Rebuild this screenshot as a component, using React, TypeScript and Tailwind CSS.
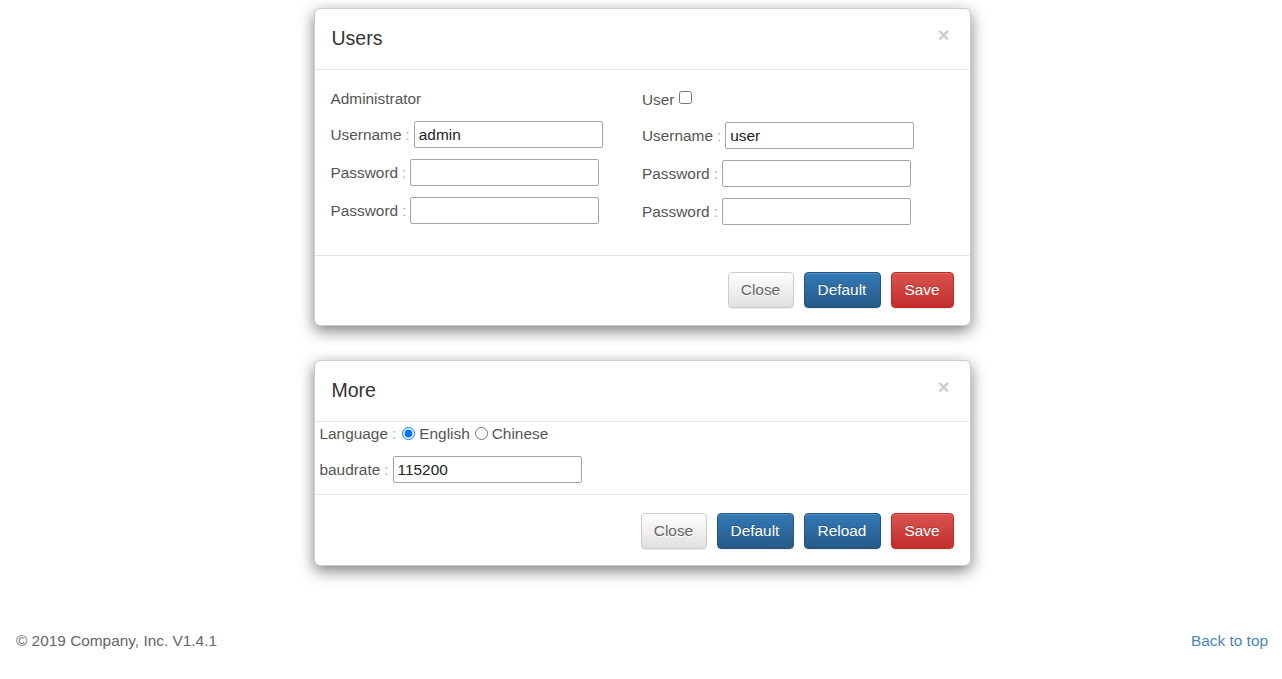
import React from "react";

const btnBase =
  "h-[36px] rounded-[4px] border text-[15.4px] leading-none shadow-[inset_0_1px_0_rgba(255,255,255,0.15),0_1px_1px_rgba(0,0,0,0.075)]";
const btnDefault = `${btnBase} border-[#ccc] bg-gradient-to-b from-white to-[#e0e0e0] text-[#666] [text-shadow:0_1px_0_#fff]`;
const btnPrimary = `${btnBase} border-[#245580] bg-gradient-to-b from-[#337ab7] to-[#265a88] text-white [text-shadow:0_-1px_0_rgba(0,0,0,0.2)]`;
const btnDanger = `${btnBase} border-[#b92c28] bg-gradient-to-b from-[#d9534f] to-[#c12e2a] text-white [text-shadow:0_-1px_0_rgba(0,0,0,0.2)]`;

const inputCls =
  "h-[27px] w-[189px] rounded-[2px] border border-[#a6a6a6] bg-white px-[4px] text-[15.4px] text-[#222] outline-none";

function Field({ label, value }: { label: string; value?: string }) {
  return (
    <div className="flex items-center">
      <span className="text-[#555]">{label}</span>
      <span className="ml-[4px] text-[#aaa]">:</span>
      <input type="text" defaultValue={value} className={`${inputCls} ml-[4px]`} />
    </div>
  );
}

function Header({ title }: { title: string }) {
  return (
    <div className="flex h-[61px] items-center justify-between border-b border-[#e5e5e5] pl-[17px] pr-[20px]">
      <h4 className="text-[19.5px] text-[#333]">{title}</h4>
      <button className="mt-[-9px] text-[20px] font-bold leading-none text-black opacity-20">×</button>
    </div>
  );
}

export default function App() {
  return (
    <div
      className="min-h-[679px] bg-white text-[15.4px]"
      style={{ fontFamily: '"Liberation Sans", Arial, sans-serif' }}
    >
      <div className="flex flex-col items-center gap-[34px] pt-[8px]">
        {/* Users */}
        <div className="w-[657px] translate-x-[1px] rounded-[6px] border border-black/20 bg-white shadow-[0_5px_15px_rgba(0,0,0,0.5)]">
          <Header title="Users" />
          <div className="grid grid-cols-2 px-[16px] pt-[18px] pb-[30px]">
            <div className="flex flex-col gap-[11px]">
              <div className="mb-[1px] flex h-[21px] items-center text-[#555]">Administrator</div>
              <Field label="Username" value="admin" />
              <Field label="Password" />
              <Field label="Password" />
            </div>
            <div className="flex flex-col gap-[11px] pt-[1px]">
              <div className="mb-[1px] flex h-[21px] items-center text-[#555]">
                User
                <input type="checkbox" className="ml-[4px] mt-[-4px] h-[13px] w-[13px]" />
              </div>
              <Field label="Username" value="user" />
              <Field label="Password" />
              <Field label="Password" />
            </div>
          </div>
          <div className="flex justify-end gap-[10px] border-t border-[#e5e5e5] px-[16px] pt-[16px] pb-[17px]">
            <button className={`${btnDefault} w-[66px]`}>Close</button>
            <button className={`${btnPrimary} w-[77px]`}>Default</button>
            <button className={`${btnDanger} w-[63px]`}>Save</button>
          </div>
        </div>

        {/* More */}
        <div className="w-[657px] translate-x-[1px] rounded-[6px] border border-black/20 bg-white shadow-[0_5px_15px_rgba(0,0,0,0.5)]">
          <Header title="More" />
          <div className="flex flex-col gap-[12px] px-[5px] pt-[1px] pb-[11px]">
            <div className="flex h-[21px] items-center text-[#555]">
              Language
              <span className="ml-[4px] text-[#aaa]">:</span>
              <input type="radio" name="lang" defaultChecked className="ml-[6px] h-[13px] w-[13px]" />
              <span className="ml-[4px]">English</span>
              <input type="radio" name="lang" className="ml-[5px] h-[13px] w-[13px]" />
              <span className="ml-[4px]">Chinese</span>
            </div>
            <div className="flex items-center">
              <span className="text-[#555]">baudrate</span>
              <span className="ml-[4px] text-[#aaa]">:</span>
              <input type="text" defaultValue="115200" className={`${inputCls} ml-[4px]`} />
            </div>
          </div>
          <div className="flex justify-end gap-[10px] border-t border-[#e5e5e5] px-[16px] pt-[18px] pb-[16px]">
            <button className={`${btnDefault} w-[66px]`}>Close</button>
            <button className={`${btnPrimary} w-[77px]`}>Default</button>
            <button className={`${btnPrimary} w-[77px]`}>Reload</button>
            <button className={`${btnDanger} w-[63px]`}>Save</button>
          </div>
        </div>
      </div>

      <footer className="mt-[63px] flex items-center justify-between pl-[16px] pr-[14px]">
        <p className="text-[#666]">© 2019 Company, Inc. V1.4.1</p>
        <a href="#" className="text-[#4a86b8]">Back to top</a>
      </footer>
    </div>
  );
}
